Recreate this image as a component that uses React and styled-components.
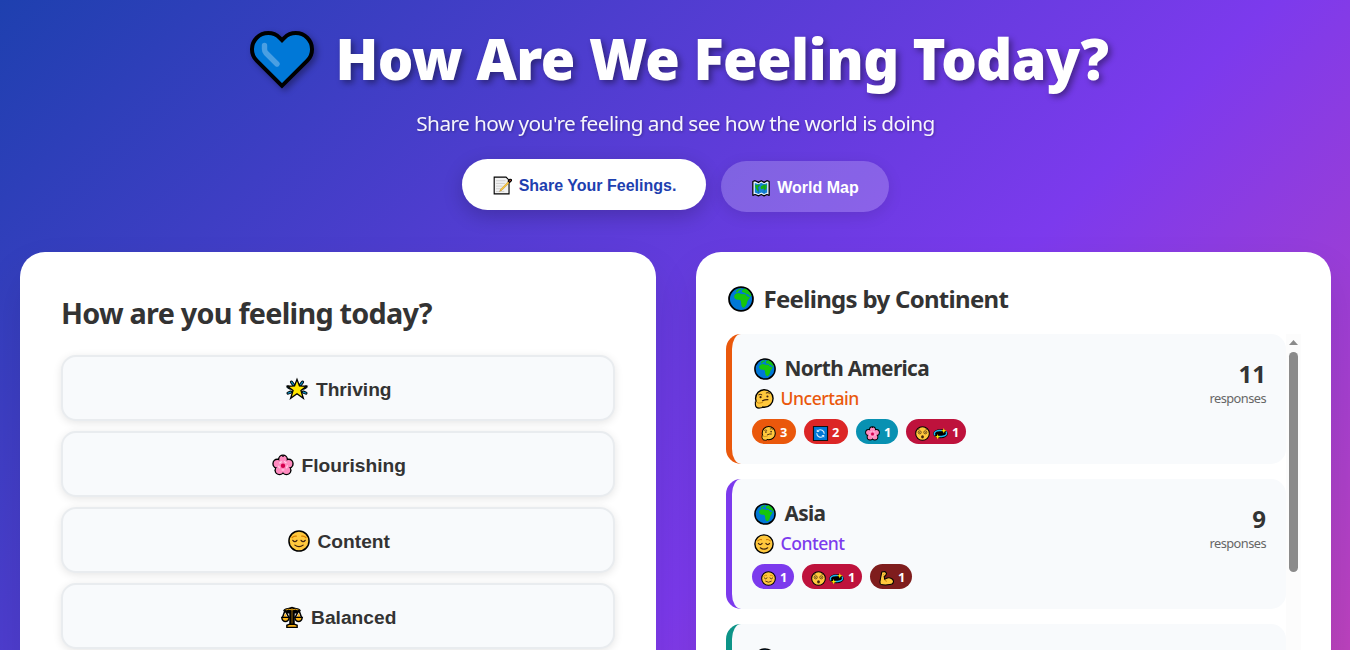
import styled, { createGlobalStyle } from 'styled-components'

const GlobalStyle = createGlobalStyle`
*{box-sizing:border-box;margin:0;padding:0;}
body{
        font-family:'Noto Sans','Open Sans',sans-serif;
        color:#333;
        overflow:hidden;
}
`

const Page = styled.div`
        display:flex;
        flex-direction:column;
        height:650px;
        padding:20px 19px 0 20px;
        overflow:hidden;
        background:linear-gradient(135deg,#1e40af 0%,#7c3aed 50%,#ec4899 100%) 0 0 / 100% 1200px no-repeat;
`

const Header = styled.header`
        display:flex;
        flex-direction:column;
        align-items:center;
        margin-bottom:40px;
        color:#fff;
`

const Title = styled.h1`
        display:flex;
        align-items:center;
        gap:22px;
        height:74px;
        padding:2px 0 0 7px;
        font-size:56px;
        font-weight:900;
        line-height:74px;
        letter-spacing:-.57px;
        white-space:nowrap;
        text-shadow:3px 3px 6px rgba(0,0,0,.4);
        svg{margin-top:4px;filter:drop-shadow(3px 3px 3px rgba(0,0,0,.35));}
`

const Subtitle = styled.p`
        margin:15px 0 24px;
        font-size:20.8px;
        line-height:28px;
        letter-spacing:-.57px;
        opacity:.95;
        white-space:nowrap;
        text-shadow:1px 1px 3px rgba(0,0,0,.3);
`

const Tabs = styled.nav`
        display:flex;
        gap:15px;
`

const Tab = styled.button`
        display:flex;
        align-items:center;
        justify-content:center;
        gap:7px;
        width:${p => p.$width}px;
        height:51px;
        padding:2px 0 0 1px;
        border:none;
        border-radius:50px;
        font:bold 16px 'Liberation Sans',Arial,sans-serif;
        white-space:nowrap;
        color:${p => p.$active ? '#1e40af' : '#fff'};
        background:${p => p.$active ? '#fff' : 'rgba(255,255,255,.2)'};
        box-shadow:${p => p.$active ? '0 6px 20px rgba(0,0,0,.2)' : '0 4px 15px rgba(0,0,0,.1)'};
        transform:${p => p.$active ? 'translateY(-2px)' : 'none'};
`

const Columns = styled.main`
        display:grid;
        grid-template-columns:1fr 1fr;
        gap:40px;
        flex:1;
        min-height:0;
`

const Card = styled.section`
        display:flex;
        flex-direction:column;
        height:700px;
        padding:${p => p.$pad};
        border-radius:25px;
        background:#fff;
        box-shadow:0 20px 40px rgba(0,0,0,.1);
`

const Question = styled.h2`
        margin-bottom:23px;
        font-size:28.8px;
        font-weight:700;
        line-height:38px;
        letter-spacing:-.75px;
        white-space:nowrap;
`

const Options = styled.div`
        display:flex;
        flex-direction:column;
        gap:10px;
`

const Option = styled.button`
        display:flex;
        align-items:center;
        justify-content:center;
        gap:8px;
        height:66px;
        padding:3px 0 0 2px;
        border:2px solid #e9ecef;
        border-radius:15px;
        background:#f8fafc;
        color:#333;
        font:bold 19.2px 'Liberation Sans',Arial,sans-serif;
        box-shadow:0 2px 8px rgba(0,0,0,.1);
        svg{position:relative;top:-1px;}
`

const ListTitle = styled.h3`
        display:flex;
        align-items:center;
        gap:10px;
        margin-bottom:19px;
        padding-left:2px;
        font-size:24px;
        font-weight:700;
        line-height:32px;
        letter-spacing:-.7px;
        white-space:nowrap;
`

const Scroller = styled.div`
        display:flex;
        height:500px;
`

const Continents = styled.div`
        display:flex;
        flex-direction:column;
        gap:15px;
        flex:1;
`

const Continent = styled.article`
        display:flex;
        justify-content:space-between;
        height:130px;
        flex:none;
        padding:20px;
        border-left:6px solid ${p => p.$color};
        border-radius:15px;
        background:#f8fafc;
`

const Name = styled.h4`
        display:flex;
        align-items:center;
        gap:9px;
        padding-left:2px;
        height:28px;
        font-size:20.8px;
        font-weight:700;
        line-height:28px;
        letter-spacing:-.65px;
        svg{position:relative;top:1px;}
`

const Dominant = styled.p`
        display:flex;
        align-items:center;
        gap:7px;
        margin:4px 0 9px;
        padding-left:2px;
        font-size:17.6px;
        font-weight:500;
        line-height:24px;
        letter-spacing:-.5px;
        color:${p => p.$color};
        svg{position:relative;top:1px;}
`

const Chips = styled.div`
        display:flex;
        gap:8px;
`

const Chip = styled.span`
        display:flex;
        align-items:center;
        gap:3px;
        width:${p => p.$width}px;
        height:25px;
        padding:1px 0 0 9px;
        border-radius:15px;
        background:${p => p.$color};
        color:#fff;
        font-size:12.8px;
        line-height:24px;
        b{margin-left:1.5px;font-weight:700;}
        svg{position:relative;top:1px;}
`

const Count = styled.div`
        padding-top:4px;
        text-align:right;
        strong{
                display:block;
                font-size:24px;
                line-height:31px;
        }
        span{
                display:block;
                font-size:12.8px;
                line-height:18px;
                letter-spacing:-.55px;
                color:#666;
        }
`

const ScrollBar = styled.div`
        display:flex;
        flex-direction:column;
        align-items:center;
        width:15px;
        padding-top:6px;
        background:#fcfcfc;
`

const Thumb = styled.div`
        width:9px;
        height:220px;
        margin-top:7px;
        border-radius:5px;
        background:#8b8b8b;
`

const Svg = styled.svg`
        flex:none;
        display:block;
        overflow:visible;
`

const petals = [[16, 8], [24.2, 14], [21, 23.6], [11, 23.6], [7.8, 14]]

const Face = () => <circle cx="16" cy="16" r="14.6" fill="#ffc83d" stroke="#000" strokeWidth="2.2" />

const drawings = {
        star: <>
                <g stroke="#000" strokeWidth="4.6" strokeLinecap="round">
                        <path d="M8 6l3 4M24 6l-3 4M3 13l3 1.500M29 13l-3 1.500M3 22l4-1.500M29 22l-4-1.500" />
                </g>
                <g stroke="#0f8fc4" strokeWidth="2" strokeLinecap="round">
                        <path d="M8 6l3 4M24 6l-3 4M3 13l3 1.500M29 13l-3 1.500M3 22l4-1.500M29 22l-4-1.500" />
                </g>
                <path d="M16 2l3.6 9.5 10.2.5-8 6.3 3.400 11.200-9.200-6.500-9.200 6.500 3.400-11.200-8-6.3 10.2-.5z" fill="#ffe600" stroke="#000" strokeWidth="2" />
        </>,
        blossom: <>
                {petals.map(([x, y]) => <circle key={x} cx={x} cy={y} r="7.4" fill="#000" />)}
                {petals.map(([x, y]) => <circle key={x} cx={x} cy={y} r="5.4" fill="#ff8bc0" />)}
                <circle cx="16" cy="17" r="7" fill="#ff8bc0" />
                <path d="M16 1l1.600 3h-3.200z" fill="#000" />
                <circle cx="16" cy="17" r="6.2" fill="none" stroke="#ffdcec" strokeWidth="1.6" strokeDasharray="4 3.5" />
                <circle cx="16" cy="17" r="3.2" fill="#d3004d" />
        </>,
        relieved: <>
                <Face />
                <g fill="none" stroke="#d67d00" strokeWidth="1.8" strokeLinecap="round"><path d="M6 11q3-3 6-2M26 11q-3-3-6-2" /></g>
                <g fill="none" stroke="#40220f" strokeWidth="1.8" strokeLinecap="round"><path d="M7 15q3 4 6 0M19 15q3 4 6 0M10 22q6 4.5 12 0" /></g>
        </>,
        balance: <>
                <path d="M3 7q2-4 7-4l6-2 6 2q5 0 7 4l-6 4h-3v16h-8V11H9z" fill="#000" />
                <path d="M16 3v24" stroke="#8a5f08" strokeWidth="1.6" />
                <path d="M5 6.500q6-3 11-1q5-2 11 1" stroke="#fbb316" strokeWidth="1.3" fill="none" />
                <path d="M6 6L2 17M6 6l5.500 11M26 6l-5.500 11M26 6l4 11" stroke="#000" strokeWidth="2.2" />
                <path d="M4 16L6 10l3 6zM23 16l3-6 2 6z" fill="#fbb316" />
                <path d="M1 16.500h11q-1 6-5.500 6T1 16.500zM20 16.500h11q-1 6-5.500 6T20 16.500zM8.500 31v-3l4-1.500h7l4 1.500v3z" fill="#fbb316" stroke="#000" strokeWidth="2" />
        </>,
        globe: <>
                <circle cx="16" cy="16" r="14.7" fill="#0078d7" stroke="#000" strokeWidth="2.2" />
                <path d="M7.500 13c0-2.500 2.500-4 6-4.300l2.500 1.100 5.500.3 2 2.600 3.500.8c-.3 2.300-2.600 3.500-3.300 5.700-.4 3.500-2.400 7.300-4.700 7.500-2.400-.3-2.700-4-3-7-.2-2.200-1.200-3-3.400-2.700-3 .2-5.100-1.700-5.100-4z" fill="#16c60c" />
                <path d="M9.500 7.500l2-3 5-1.600L15.500 5l-2.500.7L12 8zM17 7.500l.8-3.200L21 3.200c4 1.700 6.800 5 7.900 9l-1.400.6-3-2.900-1.500.4-2.500-2z" fill="#16c60c" />
        </>,
        thinking: <>
                <circle cx="16.5" cy="15.2" r="14" fill="#ffc83d" stroke="#000" strokeWidth="2.2" />
                <path d="M2 20v5q1 6 7 5.500 5-.5 5-5l-1-3z" fill="#ffc83d" />
                <path d="M2.200 20v5q.5 6 7 5.500 5-.5 5-2" fill="none" stroke="#000" strokeWidth="1.8" strokeLinejoin="round" />
                <path d="M4 21q3 2 5 1.500l5-1" fill="none" stroke="#b87400" strokeWidth="1.2" />
                <path d="M7 9.500q3-2 6 0M19 6.500q4-2 6 1" stroke="#40220f" strokeWidth="1.6" fill="none" />
                <circle cx="10.5" cy="13" r="1.7" fill="#40220f" /><circle cx="21.5" cy="12" r="1.7" fill="#40220f" />
                <path d="M13 19q5-2.500 10-2" stroke="#40220f" strokeWidth="2" fill="none" />
        </>,
        cycle: <>
                <path d="M1 1h30v30H1z" fill="#0078d7" stroke="#111" strokeWidth="2.4" />
                <path d="M11 9.500a8.500 8.500 0 0 1 13 7M21 22.500a8.500 8.500 0 0 1-13-7" fill="none" stroke="#d8eefc" strokeWidth="2.4" />
                <path d="M8 7v6h6zM24 25v-6h-6z" fill="#d8eefc" />
        </>,
        dizzyFace: <>
                <Face />
                <path d="M5 8l5-2M27 8l-5-2" stroke="#40220f" strokeWidth="1.5" />
                <g fill="none" stroke="#40220f" strokeWidth="1.5"><circle cx="10" cy="13.5" r="3.3" /><circle cx="22" cy="13.5" r="3.3" /></g>
                <circle cx="10" cy="13.5" r="1" /><circle cx="22" cy="13.5" r="1" />
                <ellipse cx="16" cy="23" rx="3" ry="3.5" fill="#40220f" />
        </>,
        swirl: <>
                <ellipse cx="16" cy="16.5" rx="15.5" ry="9.5" fill="#000" />
                <path d="M28 12q4 8-7 10-5 1-9 0M4 20q-4-7 6-10 5-1 9 0" fill="none" stroke="#19b5ee" strokeWidth="3" />
                <path d="M23 4l1.500 4.500L29 10l-4.500 1.500L23 16l-1.500-4.500L17 10l4.500-1.500zM10 17l1.500 4.500L16 23l-4.500 1.500L10 29l-1.500-4.500L4 23l4.500-1.500z" fill="#ffe600" />
        </>,
        biceps: <>
                <path d="M6 2l7-1 3 4-2 5-3 1 1 7q6-5 12-3 7 2 7 8-1 6-8 6-12 2-20-1-2-3 0-11z" fill="#ffc83d" stroke="#000" strokeWidth="2.2" strokeLinejoin="round" />
                <path d="M12 18q1 4 5 4M11 6l-2 2" fill="none" stroke="#b36b00" strokeWidth="1.4" />
        </>,
        memo: <>
                <path d="M2 2h20l5 5v23H2z" fill="#f2f2f2" stroke="#000" strokeWidth="1.9" />
                <path d="M5 8h16M5 12.500h15M5 17h11M5 21.500h8M5 26h14" stroke="#c4c4c4" strokeWidth="1.3" />
                <path d="M11 26l2-4L27 8l2 2-14 14z" fill="#ffc83d" stroke="#8a6a20" strokeWidth=".6" />
                <path d="M25.500 8.500l3-3q3-.5 2.500 2.500L28 11z" fill="#e0503c" stroke="#000" strokeWidth="2" />
        </>,
        map: <>
                <path d="M1.500 4.500l4-1.500 6 3 5-3 5 3 5-3 4 1.500V29l-4-1.500-5 2.500-5-2.500-5 2.500-6-2.500-4 1.500z" fill="#e8f6ff" stroke="#000" strokeWidth="2.2" strokeLinejoin="round" />
                <path d="M5 7l6.500 2.500 5-3 5 3L27 7v17l-5.500 2.500-5-2.500-5 2.500L5 24z" fill="#1683d8" />
                <path d="M6 10l4 1 3-2 1 3-4 3 2 4-1 4-3-5-2-4zM16 13l5-3 5 0v6l-3 5-2-4-4 1-2-2z" fill="#16b50c" />
                <path d="M11.500 8v18M21.500 8v18" stroke="#0a4b90" strokeWidth=".6" />
        </>,
}

const Emoji = ({ name, size }) => <Svg width={size} height={size} viewBox="0 0 32 32">{drawings[name]}</Svg>

const Heart = () => <Svg width="64" height="58" viewBox="0 0 64 58">
        <path d="M32 54.800L6.700 29.700A16.200 16.200 0 0 1 29.700 6.800L32 9.100L34.300 6.800A16.200 16.200 0 0 1 57.300 29.700Z" fill="#0078d7" stroke="#000" strokeWidth="4" />
        <path d="M14.500 14.500v3.500q0 2.500 1.500 4l11 11" fill="none" stroke="#4a9fe3" strokeWidth="5.4" strokeLinecap="round" />
</Svg>

const options = [
        { icon: 'star', label: 'Thriving' },
        { icon: 'blossom', label: 'Flourishing' },
        { icon: 'relieved', label: 'Content' },
        { icon: 'balance', label: 'Balanced' },
]

const continents = [
        {
                name: 'North America', color: '#ea580c', icon: 'thinking', mood: 'Uncertain', total: 11,
                chips: [
                        { icons: ['thinking'], n: 3, color: '#ea580c', width: 44 },
                        { icons: ['cycle'], n: 2, color: '#dc2626', width: 44 },
                        { icons: ['blossom'], n: 1, color: '#0891b2', width: 42 },
                        { icons: ['dizzyFace', 'swirl'], n: 1, color: '#be123c', width: 60 },
                ],
        },
        {
                name: 'Asia', color: '#7c3aed', icon: 'relieved', mood: 'Content', total: 9,
                chips: [
                        { icons: ['relieved'], n: 1, color: '#7c3aed', width: 42 },
                        { icons: ['dizzyFace', 'swirl'], n: 1, color: '#be123c', width: 60 },
                        { icons: ['biceps'], n: 1, color: '#7f1d1d', width: 42 },
                ],
        },
]

export default function App() {
        return <>
                <GlobalStyle />
                <Page>
                        <Header>
                                <Title><Heart />How Are We Feeling Today?</Title>
                                <Subtitle>Share how you&apos;re feeling and see how the world is doing</Subtitle>
                                <Tabs>
                                        <Tab $active $width={244}><Emoji name="memo" size={19} />Share Your Feelings.</Tab>
                                        <Tab $width={168}><Emoji name="map" size={18} />World Map</Tab>
                                </Tabs>
                        </Header>

                        <Columns>
                                <Card $pad="42px 41px 0">
                                        <Question>How are you feeling today?</Question>
                                        <Options>
                                                {options.map(o => <Option key={o.label}><Emoji name={o.icon} size={22} />{o.label}</Option>)}
                                        </Options>
                                </Card>

                                <Card $pad="31px 30px 0">
                                        <ListTitle><Emoji name="globe" size={26} />Feelings by Continent</ListTitle>
                                        <Scroller>
                                                <Continents>
                                                        {continents.map(c => <Continent key={c.name} $color={c.color}>
                                                                <div>
                                                                        <Name><Emoji name="globe" size={22} />{c.name}</Name>
                                                                        <Dominant $color={c.color}><Emoji name={c.icon} size={20} />{c.mood}</Dominant>
                                                                        <Chips>
                                                                                {c.chips.map(chip => <Chip key={chip.color} $color={chip.color} $width={chip.width}>
                                                                                        {chip.icons.map(i => <Emoji key={i} name={i} size={15} />)}
                                                                                        <b>{chip.n}</b>
                                                                                </Chip>)}
                                                                        </Chips>
                                                                </div>
                                                                <Count>
                                                                        <strong>{c.total}</strong>
                                                                        <span>responses</span>
                                                                </Count>
                                                        </Continent>)}
                                                        <Continent $color="#0d9488">
                                                                <Name><Emoji name="globe" size={22} /></Name>
                                                        </Continent>
                                                </Continents>
                                                <ScrollBar>
                                                        <Svg width="9" height="5" viewBox="0 0 9 5"><path d="M0 5L4.500 0L9 5Z" fill="#8b8b8b" /></Svg>
                                                        <Thumb />
                                                </ScrollBar>
                                        </Scroller>
                                </Card>
                        </Columns>
                </Page>
        </>
}
